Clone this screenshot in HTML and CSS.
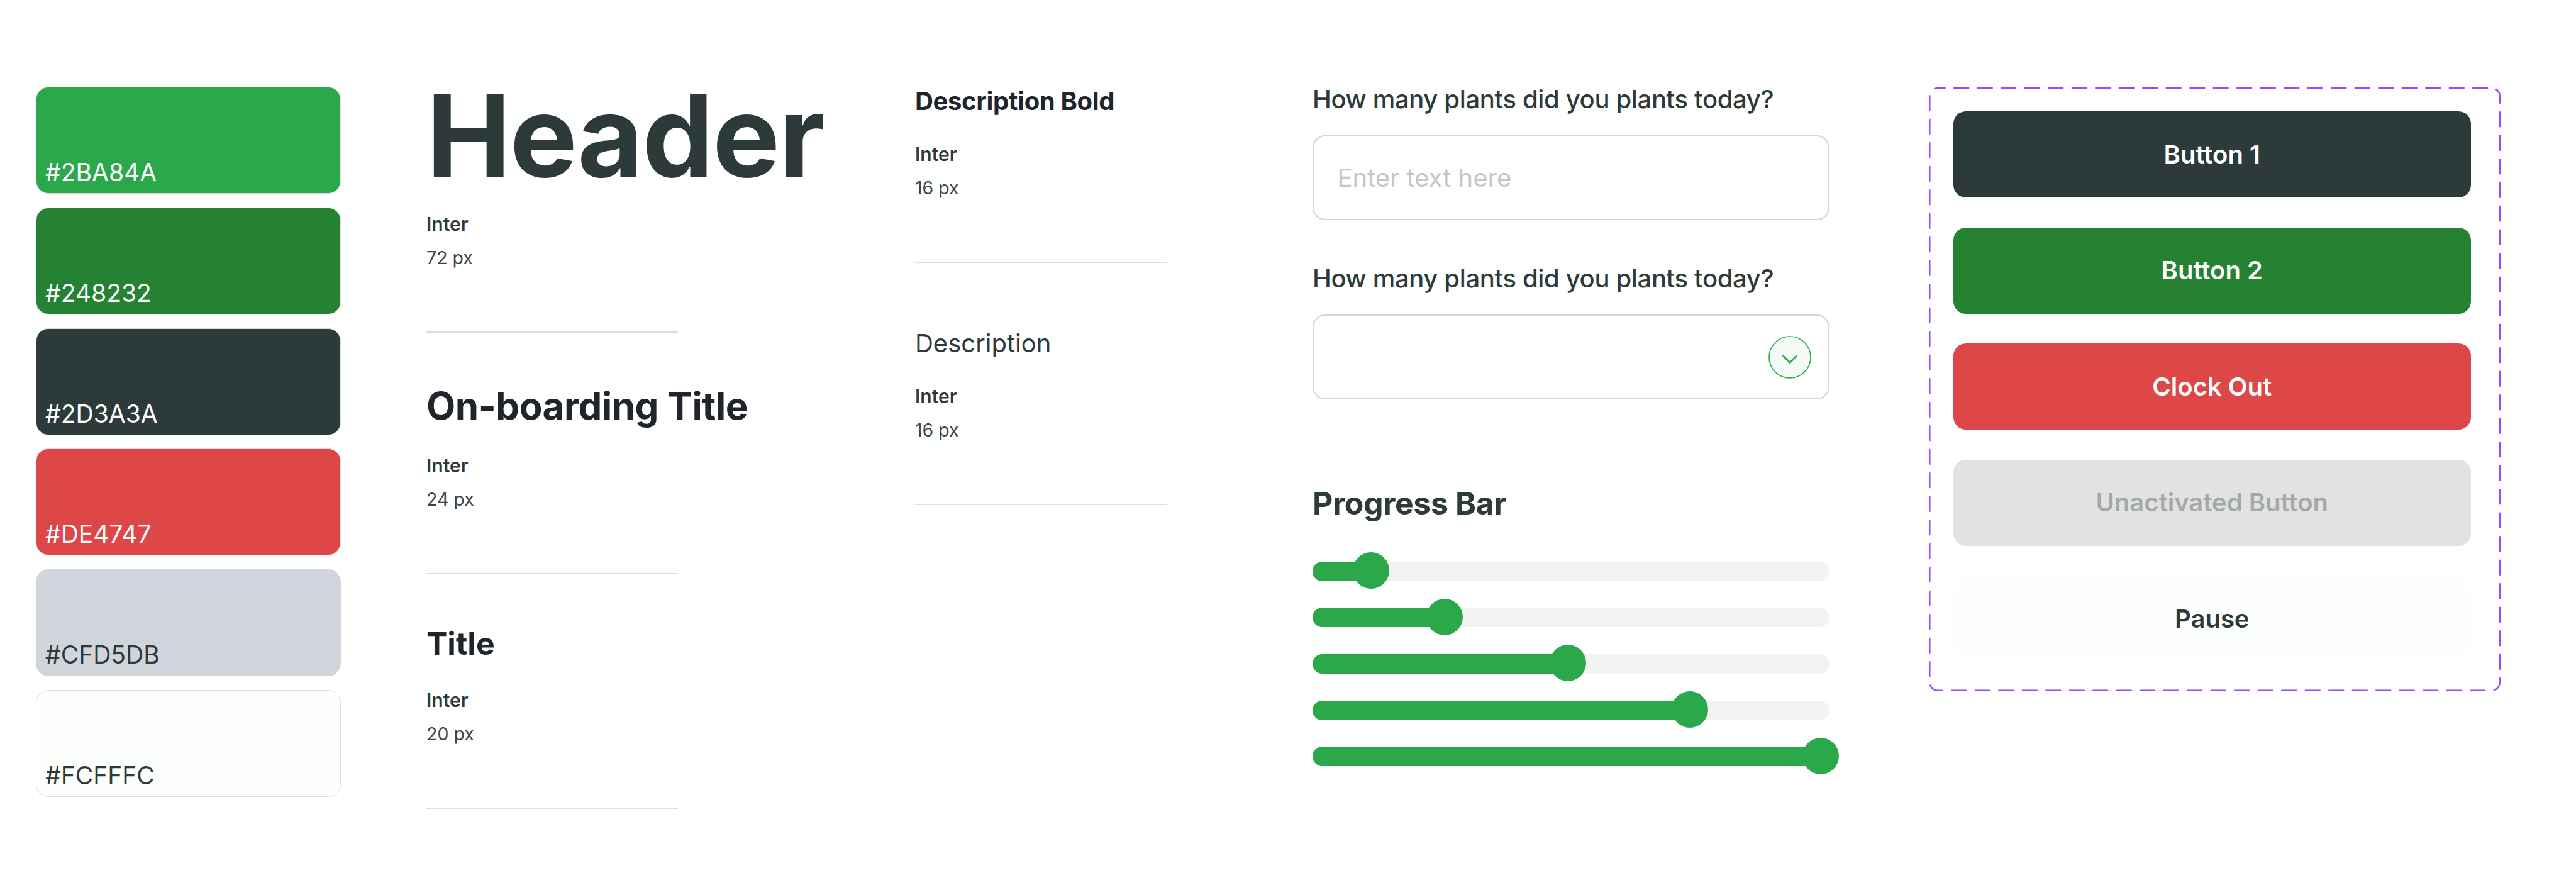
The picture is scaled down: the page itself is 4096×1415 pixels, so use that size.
FILE: index.html
```html
<!DOCTYPE html>
<html lang="en">
<head>
<meta charset="utf-8">
<title>Design System</title>
<link rel="stylesheet" href="styles.css">
</head>
<body>
<main class="board">
  <section class="swatches">
    <div class="swatch swatch-green"><span>#2BA84A</span></div>
    <div class="swatch swatch-dark-green"><span>#248232</span></div>
    <div class="swatch swatch-slate"><span>#2D3A3A</span></div>
    <div class="swatch swatch-red"><span>#DE4747</span></div>
    <div class="swatch swatch-gray"><span>#CFD5DB</span></div>
    <div class="swatch swatch-white"><span>#FCFFFC</span></div>
  </section>

  <section class="type-col type-col-a">
    <div class="spec">
      <h1 class="spec-title t-header">Header</h1>
      <div class="spec-font">Inter</div>
      <div class="spec-size">72 px</div>
    </div>
    <div class="spec">
      <h2 class="spec-title t-onboarding">On-boarding Title</h2>
      <div class="spec-font">Inter</div>
      <div class="spec-size">24 px</div>
    </div>
    <div class="spec">
      <h3 class="spec-title t-title">Title</h3>
      <div class="spec-font">Inter</div>
      <div class="spec-size">20 px</div>
    </div>
  </section>

  <section class="type-col type-col-b">
    <div class="spec">
      <div class="spec-title t-desc-bold">Description Bold</div>
      <div class="spec-font">Inter</div>
      <div class="spec-size">16 px</div>
    </div>
    <div class="spec">
      <div class="spec-title t-desc">Description</div>
      <div class="spec-font">Inter</div>
      <div class="spec-size">16 px</div>
    </div>
  </section>

  <section class="form-col">
    <label class="field-label">How many plants did you plants today?</label>
    <div class="field field-text"><span class="placeholder">Enter text here</span></div>
    <label class="field-label field-label-second">How many plants did you plants today?</label>
    <div class="field field-select">
      <svg class="chevron" width="68" height="68" viewBox="0 0 68 68" aria-hidden="true">
        <circle cx="34" cy="34" r="33" fill="rgba(43,168,74,0.05)" stroke="#2BA84A" stroke-width="1.6"/>
        <polyline points="23.5,32 34,42.5 44.5,32" fill="none" stroke="#2BA84A" stroke-width="2.8" stroke-linecap="round" stroke-linejoin="round"/>
      </svg>
    </div>

    <h3 class="progress-title">Progress Bar</h3>
    <div class="progress-list">
      <div class="progress-row"><div class="track"><div class="fill" style="width:11.3%"></div></div></div>
      <div class="progress-row"><div class="track"><div class="fill" style="width:25.5%"></div></div></div>
      <div class="progress-row"><div class="track"><div class="fill" style="width:49.4%"></div></div></div>
      <div class="progress-row"><div class="track"><div class="fill" style="width:73%"></div></div></div>
      <div class="progress-row"><div class="track"><div class="fill" style="width:98.3%"></div></div></div>
    </div>
  </section>

  <section class="button-set">
    <svg class="frame" width="909" height="960" viewBox="0 0 909 960" aria-hidden="true">
      <rect x="1.25" y="1.25" width="906.5" height="957.5" rx="12.5" ry="12.5" fill="none" stroke="#9747FF" stroke-width="2.5" stroke-dasharray="25 12.5" stroke-dashoffset="12"/>
    </svg>
    <button class="btn btn-dark">Button 1</button>
    <button class="btn btn-green">Button 2</button>
    <button class="btn btn-red">Clock Out</button>
    <button class="btn btn-disabled">Unactivated Button</button>
    <button class="btn btn-light">Pause</button>
  </section>
</main>
</body>
</html>
```

FILE: styles.css
```css
* { box-sizing: border-box; }

html, body {
  margin: 0;
  padding: 0;
  background: #ffffff;
}

body {
  font-family: "Inter", "Noto Sans", "Liberation Sans", sans-serif;
  color: #2D3A3A;
  width: 4096px;
  height: 1415px;
  overflow: hidden;
}

.board {
  display: grid;
  grid-template-columns: 621px 777px 632px 980px 909px;
  align-items: start;
  padding: 138px 0 0 57px;
}

/* ---------- Swatches ---------- */
.swatches {
  display: flex;
  flex-direction: column;
  gap: 21.8px;
  width: 485px;
}

.swatch {
  height: 170px;
  border-radius: 20px;
  border: 1px solid #dadee2;
  display: flex;
  align-items: flex-end;
  padding: 0 14px 13px 14px;
  font-size: 39px;
  line-height: 40px;
  font-weight: 400;
  color: #ffffff;
}

.swatch-green { background: #2BA84A; }
.swatch-dark-green { background: #248232; }
.swatch-slate { background: #2D3A3A; }
.swatch-red { background: #DE4747; }
.swatch-gray { background: #CFD5DB; color: #2D3A3A; border-color: #CFD5DB; }
.swatch-white { background: #FCFFFC; color: #2D3A3A; }

/* ---------- Typography specs ---------- */
.type-col {
  display: flex;
  flex-direction: column;
  width: 400px;
}

.type-col-a { gap: 80px; }
.type-col-b { gap: 105px; }

.spec {
  padding-bottom: 97px;
  border-bottom: 2.5px solid #dcdfe2;
}

.spec-title {
  margin: 0;
  white-space: nowrap;
  color: #1f252b;
}

.t-header {
  font-size: 180px;
  line-height: 155px;
  font-weight: 700;
  color: #2D3A3A;
  letter-spacing: -1.6px;
  margin-bottom: 43px;
}

.t-onboarding {
  font-size: 60px;
  line-height: 72px;
  font-weight: 700;
  letter-spacing: -0.45px;
  margin-bottom: 39px;
}

.t-title {
  font-size: 50px;
  line-height: 60px;
  font-weight: 700;
  margin-bottom: 40px;
}

.t-desc-bold {
  font-size: 40px;
  line-height: 45px;
  font-weight: 700;
  letter-spacing: -0.35px;
  margin-bottom: 41.6px;
}

.t-desc {
  font-size: 40px;
  line-height: 45px;
  font-weight: 400;
  color: #2D3A3A;
  margin-bottom: 42.6px;
}

.spec-font {
  font-size: 30px;
  line-height: 40px;
  font-weight: 600;
  color: #2D3A3A;
}

.spec-size {
  margin-top: 14px;
  font-size: 28.5px;
  line-height: 40px;
  font-weight: 400;
  color: #3b4747;
}

/* ---------- Form column ---------- */
.form-col {
  display: flex;
  flex-direction: column;
  width: 822px;
}

.field-label {
  display: block;
  font-size: 40px;
  line-height: 40px;
  font-weight: 500;
  letter-spacing: -0.35px;
  color: #2D3A3A;
  white-space: nowrap;
}

.field-label-second { margin-top: 73px; }

.field {
  margin-top: 37px;
  height: 135px;
  border: 2.5px solid #CFD5DB;
  border-radius: 20px;
  background: #ffffff;
  display: flex;
  align-items: center;
}

.field-text { padding-left: 37.5px; }

.placeholder {
  font-size: 40px;
  line-height: 48px;
  color: #c0c8c8;
}

.field-select {
  justify-content: flex-end;
  padding-right: 27.5px;
}

.chevron { display: block; }

.progress-title {
  margin: 135px 0 0 0;
  font-size: 50px;
  line-height: 60px;
  font-weight: 700;
  letter-spacing: -0.4px;
  color: #2D3A3A;
}

.progress-list {
  margin-top: 49px;
  display: flex;
  flex-direction: column;
  gap: 15.7px;
}

.progress-row {
  height: 58px;
  display: flex;
  align-items: center;
}

.track {
  width: 100%;
  height: 31px;
  border-radius: 16px;
  background: #f2f2f2;
}

.fill {
  position: relative;
  height: 100%;
  border-radius: 16px 0 0 16px;
  background: #2BA84A;
}

.fill::after {
  content: "";
  position: absolute;
  right: -29px;
  top: 50%;
  width: 58px;
  height: 58px;
  margin-top: -30px;
  border-radius: 50%;
  background: #2BA84A;
}

/* ---------- Button set ---------- */
.button-set {
  position: relative;
  width: 909px;
  height: 960px;
  margin-top: 1px;
  padding: 38px 47px 46px 38.5px;
  display: flex;
  flex-direction: column;
  gap: 47.5px;
}

.frame {
  position: absolute;
  left: 0;
  top: 0;
  pointer-events: none;
}

.btn {
  height: 137px;
  border: 0;
  border-radius: 20px;
  font-family: "Inter", "Noto Sans", "Liberation Sans", sans-serif;
  font-size: 40px;
  font-weight: 600;
  line-height: 48px;
  color: #ffffff;
  padding: 0;
  text-align: center;
}

.btn-dark { background: #2D3A3A; }
.btn-green { background: #248232; }
.btn-red { background: #DE4747; }
.btn-disabled { background: #E2E2E2; color: #a3a9a9; }
.btn-light { background: #FCFFFC; color: #2D3A3A; }
```
